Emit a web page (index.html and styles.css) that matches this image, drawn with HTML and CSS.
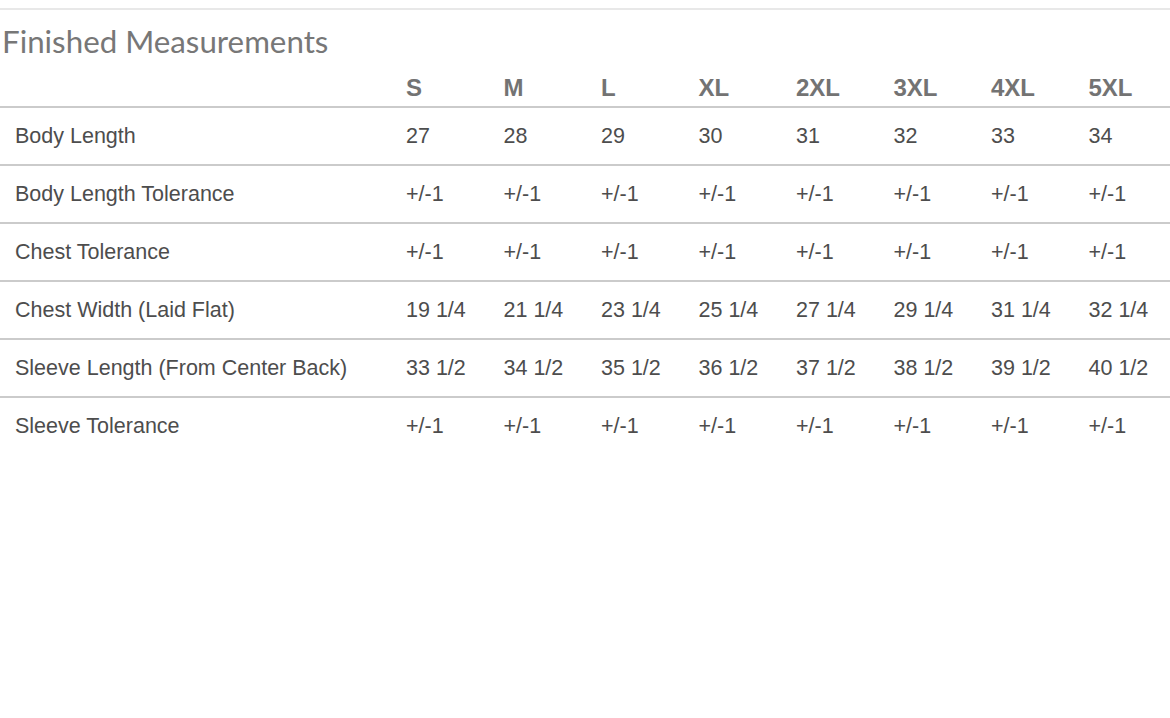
FILE: index.html
```html
<!DOCTYPE html>
<html>
<head>
<meta charset="utf-8">
<link rel="stylesheet" href="styles.css">
</head>
<body>
<div class="page">
  <h2 class="title">Finished Measurements</h2>
  <div class="table">
    <div class="row head">
      <div class="cell label"></div>
      <div class="cell">S</div><div class="cell">M</div><div class="cell">L</div><div class="cell">XL</div>
      <div class="cell">2XL</div><div class="cell">3XL</div><div class="cell">4XL</div><div class="cell">5XL</div>
    </div>
    <div class="row">
      <div class="cell label">Body Length</div>
      <div class="cell">27</div><div class="cell">28</div><div class="cell">29</div><div class="cell">30</div>
      <div class="cell">31</div><div class="cell">32</div><div class="cell">33</div><div class="cell">34</div>
    </div>
    <div class="row">
      <div class="cell label">Body Length Tolerance</div>
      <div class="cell">+/-1</div><div class="cell">+/-1</div><div class="cell">+/-1</div><div class="cell">+/-1</div>
      <div class="cell">+/-1</div><div class="cell">+/-1</div><div class="cell">+/-1</div><div class="cell">+/-1</div>
    </div>
    <div class="row">
      <div class="cell label">Chest Tolerance</div>
      <div class="cell">+/-1</div><div class="cell">+/-1</div><div class="cell">+/-1</div><div class="cell">+/-1</div>
      <div class="cell">+/-1</div><div class="cell">+/-1</div><div class="cell">+/-1</div><div class="cell">+/-1</div>
    </div>
    <div class="row">
      <div class="cell label">Chest Width (Laid Flat)</div>
      <div class="cell">19 1/4</div><div class="cell">21 1/4</div><div class="cell">23 1/4</div><div class="cell">25 1/4</div>
      <div class="cell">27 1/4</div><div class="cell">29 1/4</div><div class="cell">31 1/4</div><div class="cell">32 1/4</div>
    </div>
    <div class="row">
      <div class="cell label">Sleeve Length (From Center Back)</div>
      <div class="cell">33 1/2</div><div class="cell">34 1/2</div><div class="cell">35 1/2</div><div class="cell">36 1/2</div>
      <div class="cell">37 1/2</div><div class="cell">38 1/2</div><div class="cell">39 1/2</div><div class="cell">40 1/2</div>
    </div>
    <div class="row last">
      <div class="cell label">Sleeve Tolerance</div>
      <div class="cell">+/-1</div><div class="cell">+/-1</div><div class="cell">+/-1</div><div class="cell">+/-1</div>
      <div class="cell">+/-1</div><div class="cell">+/-1</div><div class="cell">+/-1</div><div class="cell">+/-1</div>
    </div>
  </div>
</div>
</body>
</html>
```

FILE: styles.css
```css
html, body {
  margin: 0;
  padding: 0;
  background: #ffffff;
}

.page {
  margin-top: 8px;
  border-top: 2px solid #e8e8e8;
  width: 1170px;
}

.title {
  margin: 0;
  padding-left: 2px;
  height: 54px;
  line-height: 62px;
  font-family: "Lato", "Open Sans", sans-serif;
  font-weight: 400;
  font-size: 31.3px;
  color: #777777;
}

.table {
  font-family: "Liberation Sans", Arial, sans-serif;
}

.row {
  display: grid;
  grid-template-columns: 390px repeat(8, 1fr);
  height: 56px;
  border-bottom: 2px solid #cbcbcb;
  align-items: center;
  font-size: 21.5px;
  color: #4d4d4d;
}

.row.last {
  border-bottom: none;
}

.row.head {
  height: 42px;
  align-items: end;
  font-weight: bold;
  font-size: 24px;
  color: #737373;
}

.row.head .cell {
  padding-bottom: 4px;
}

.cell {
  padding-left: 16px;
  white-space: nowrap;
}

.cell.label {
  padding-left: 15px;
}
```
